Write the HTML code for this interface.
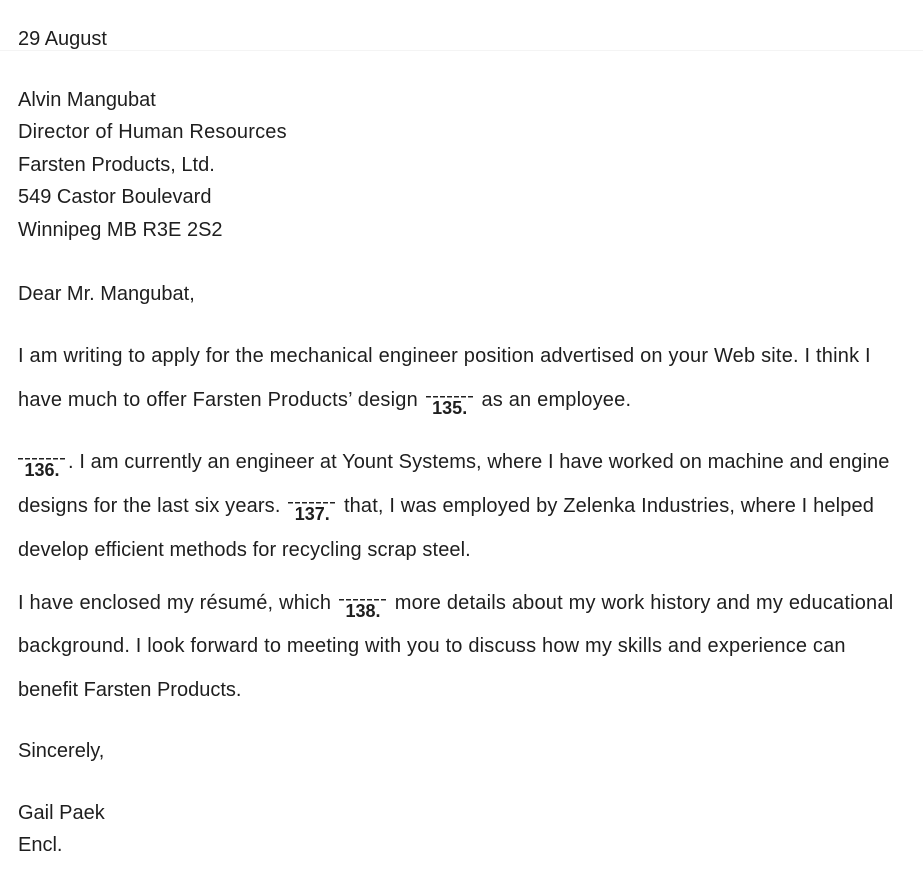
<!DOCTYPE html>
<html><head><meta charset="utf-8"><style>
html,body{margin:0;padding:0;background:#fff;}
body{width:923px;height:885px;position:relative;overflow:hidden;font-family:"Liberation Sans",Arial,sans-serif;color:#1e1e1e;font-size:20px;}
.l{position:absolute;left:18px;white-space:nowrap;line-height:22px;letter-spacing:0;}
.b{position:relative;display:inline-block;width:48px;height:10px;margin:0 2px;vertical-align:4px;background:repeating-linear-gradient(90deg,#222 0 5px,transparent 5px 7px) 0 4px/100% 1.5px no-repeat;}
.b i{position:absolute;left:50%;transform:translateX(-50%);top:6px;font-style:normal;font-weight:bold;font-size:18px;letter-spacing:0;line-height:20px;}
.hr{position:absolute;left:0;top:50px;width:923px;height:1px;background:#f4f4f4;}
</style></head><body>
<div class="l" style="top:28px;left:18px;">29 August</div>
<div class="hr"></div>
<div class="l" style="top:89px">Alvin Mangubat</div>
<div class="l" style="top:121px;letter-spacing:0.2px">Director of Human Resources</div>
<div class="l" style="top:154px">Farsten Products, Ltd.</div>
<div class="l" style="top:186px">549 Castor Boulevard</div>
<div class="l" style="top:219px">Winnipeg MB R3E 2S2</div>
<div class="l" style="top:283px">Dear Mr. Mangubat,</div>
<div class="l" style="top:345px;letter-spacing:0.2px">I am writing to apply for the mechanical engineer position advertised on your Web site. I think I</div>
<div class="l" style="top:389px;letter-spacing:0.2px">have much to offer Farsten Products’ design <span class="b"><i>135.</i></span> as an employee.</div>
<div class="l" style="top:451px;letter-spacing:0.1px"><span class="b" style="margin-left:0"><i>136.</i></span>. I am currently an engineer at Yount Systems, where I have worked on machine and engine</div>
<div class="l" style="top:495px;letter-spacing:0.15px">designs for the last six years. <span class="b"><i>137.</i></span> that, I was employed by Zelenka Industries, where I helped</div>
<div class="l" style="top:539px;letter-spacing:0.1px">develop efficient methods for recycling scrap steel.</div>
<div class="l" style="top:592px;letter-spacing:0.2px">I have enclosed my résumé, which <span class="b"><i>138.</i></span> more details about my work history and my educational</div>
<div class="l" style="top:635px;letter-spacing:0.18px">background. I look forward to meeting with you to discuss how my skills and experience can</div>
<div class="l" style="top:679px">benefit Farsten Products.</div>
<div class="l" style="top:740px">Sincerely,</div>
<div class="l" style="top:802px">Gail Paek</div>
<div class="l" style="top:834px">Encl.</div>
</body></html>
